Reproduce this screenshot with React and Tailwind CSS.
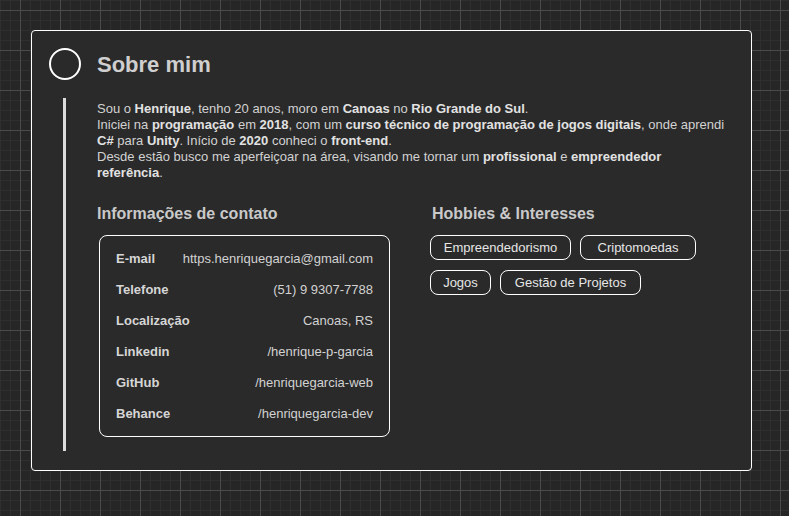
export default function App() {
  const contacts = [
    ["E-mail", "https.henriquegarcia@gmail.com"],
    ["Telefone", "(51) 9 9307-7788"],
    ["Localização", "Canoas, RS"],
    ["Linkedin", "/henrique-p-garcia"],
    ["GitHub", "/henriquegarcia-web"],
    ["Behance", "/henriquegarcia-dev"],
  ];
  const b = "text-[#e2e2e2]";
  return (
    <div
      className="h-[516px] w-full overflow-hidden bg-[#262626] bg-[linear-gradient(to_right,#4b4b4b_1px,transparent_1px),linear-gradient(to_bottom,#4b4b4b_1px,transparent_1px),linear-gradient(to_right,#2f2f2f_1px,transparent_1px),linear-gradient(to_bottom,#2f2f2f_1px,transparent_1px)] bg-[size:40px_40px,40px_40px,10px_10px,10px_10px] bg-[position:20px_10px,20px_10px,0_0,0_0] pt-[30px] pl-[31px] font-['Liberation_Sans',Arial,sans-serif]"
    >
      <div className="w-[721px] h-[441px] rounded-[4px] border border-white bg-[#2a2a2a] pt-[17px] pl-[17px] flex flex-col">
        <div className="flex items-center gap-[16px]">
          <div className="w-8 h-8 rounded-full border-2 border-white shrink-0" />
          <h1 className="text-[22px] font-bold leading-[26px] pt-[2px] text-[#cfcfcf]">Sobre mim</h1>
        </div>
        <div className="flex gap-[16px]">
          <div className="w-8 shrink-0 flex">
            <div className="ml-[14px] mt-[18px] w-[3px] h-[353px] bg-[#dcdcdc]" />
          </div>
          <div className="flex flex-col pt-[21px] w-[630px]">
            <div className="flex flex-col text-[13px] leading-[16px] text-[#d2d2d2]">
              <p>
                Sou o <b className={b}>Henrique</b>, tenho 20 anos, moro em <b className={b}>Canoas</b> no <b className={b}>Rio Grande do Sul</b>.
              </p>
              <p>
                Iniciei na <b className={b}>programação</b> em <b className={b}>2018</b>, com um <b className={b}>curso técnico de programação de jogos digitais</b>, onde aprendi
              </p>
              <p>
                <b className={b}>C#</b> para <b className={b}>Unity</b>. Início de <b className={b}>2020</b> conheci o <b className={b}>front-end</b>.
              </p>
              <p>
                Desde estão busco me aperfeiçoar na área, visando me tornar um <b className={b}>profissional</b> e <b className={b}>empreendedor</b>
              </p>
              <p>
                <b className={b}>referência</b>.
              </p>
            </div>
            <div className="flex mt-[24px]">
              <div className="w-[334px] shrink-0 flex flex-col">
                <h2 className="text-[16px] font-bold leading-[18px] text-[#c9c9c9]">Informações de contato</h2>
                <div className="mt-[12px] ml-[2px] w-[291px] rounded-[8px] border border-white px-[16px] py-[15px] flex flex-col gap-[16px]">
                  {contacts.map(([k, v]) => (
                    <div key={k} className="flex justify-between text-[13px] leading-[15px]">
                      <span className="font-bold text-[#d6d6d6]">{k}</span>
                      <span className="text-[#d2d2d2]">{v}</span>
                    </div>
                  ))}
                </div>
              </div>
              <div className="flex flex-col">
                <h2 className="ml-[1px] text-[16px] font-bold leading-[18px] text-[#c9c9c9]">Hobbies &amp; Interesses</h2>
                <div className="mt-[12px] -ml-[1px] flex flex-col gap-[10px]">
                  <div className="flex gap-[9px]">
                    <span className="w-[141px] h-[25px] flex items-center justify-center rounded-[8px] border border-white text-[13px] leading-[15px] text-[#e6e6e6]">Empreendedorismo</span>
                    <span className="w-[116px] h-[25px] flex items-center justify-center rounded-[8px] border border-white text-[13px] leading-[15px] text-[#e6e6e6]">Criptomoedas</span>
                  </div>
                  <div className="flex gap-[9px]">
                    <span className="w-[61px] h-[25px] flex items-center justify-center rounded-[8px] border border-white text-[13px] leading-[15px] text-[#e6e6e6]">Jogos</span>
                    <span className="w-[141px] h-[25px] flex items-center justify-center rounded-[8px] border border-white text-[13px] leading-[15px] text-[#e6e6e6]">Gestão de Projetos</span>
                  </div>
                </div>
              </div>
            </div>
          </div>
        </div>
      </div>
    </div>
  );
}
